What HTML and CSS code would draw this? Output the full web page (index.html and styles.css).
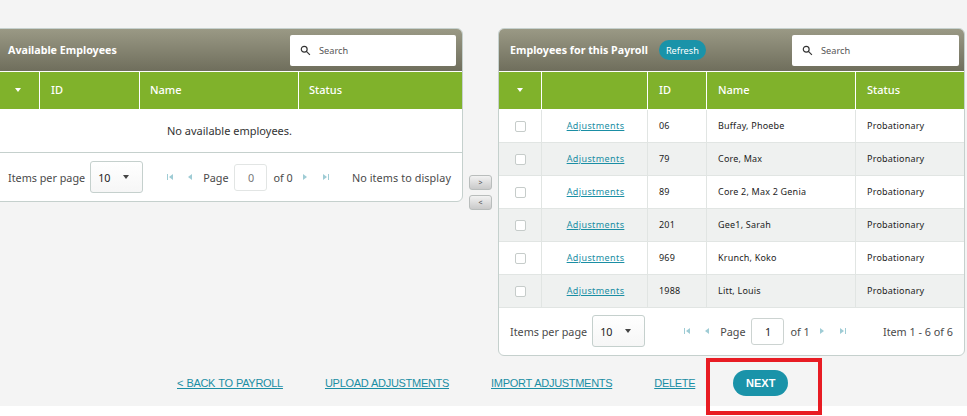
FILE: index.html
```html
<!DOCTYPE html>
<html lang="en">
<head>
<meta charset="utf-8">
<title>Payroll Employees</title>
<link rel="stylesheet" href="styles.css">
</head>
<body>
<div class="page">
  <div class="panels">
    <section class="panel panel-left">
      <header class="panel-head">
        <h2>Available Employees</h2>
        <label class="search"><svg class="search-icon" viewBox="0 0 12 12"><circle cx="4.6" cy="4.6" r="3.2"/><path d="M7 7l3.8 3.8"/></svg><span>Search</span></label>
      </header>
      <div class="grid-row grid-head cols-left">
        <div class="cell cell-sort"><i class="tri"></i></div>
        <div class="cell">ID</div>
        <div class="cell">Name</div>
        <div class="cell">Status</div>
      </div>
      <div class="empty">No available employees.</div>
      <footer class="pager">
        <span class="pager-label">Items per page</span>
        <div class="select"><span>10</span><i class="tri tri-dark"></i></div>
        <div class="pager-nav nav-left">
          <svg class="nav first" viewBox="0 0 6 6"><path d="M0 0h1v6H0zM6 0v6L2 3z"/></svg>
          <svg class="nav prev" viewBox="0 0 6 6"><path d="M5 0v6L1 3z"/></svg>
          <span>Page</span>
          <span class="page-box muted">0</span>
          <span>of 0</span>
          <svg class="nav next" viewBox="0 0 6 6"><path d="M1 0v6l4-3z"/></svg>
          <svg class="nav last" viewBox="0 0 6 6"><path d="M0 0v6l4-3zM5 0h1v6H5z"/></svg>
        </div>
        <span class="pager-info info-wide">No items to display</span>
      </footer>
    </section>

    <div class="movers">
      <button class="mover">&gt;</button>
      <button class="mover">&lt;</button>
    </div>

    <section class="panel panel-right">
      <header class="panel-head">
        <h2>Employees for this Payroll</h2>
        <button class="refresh">Refresh</button>
        <label class="search"><svg class="search-icon" viewBox="0 0 12 12"><circle cx="4.6" cy="4.6" r="3.2"/><path d="M7 7l3.8 3.8"/></svg><span>Search</span></label>
      </header>
      <div class="grid-row grid-head cols-right">
        <div class="cell cell-sort"><i class="tri"></i></div>
        <div class="cell"></div>
        <div class="cell">ID</div>
        <div class="cell">Name</div>
        <div class="cell">Status</div>
      </div>
      <div class="grid-row body-row cols-right">
        <div class="cell cell-check"><i class="check"></i></div><div class="cell cell-link"><a href="#">Adjustments</a></div><div class="cell">06</div><div class="cell">Buffay, Phoebe</div><div class="cell">Probationary</div>
      </div>
      <div class="grid-row body-row alt cols-right">
        <div class="cell cell-check"><i class="check"></i></div><div class="cell cell-link"><a href="#">Adjustments</a></div><div class="cell">79</div><div class="cell">Core, Max</div><div class="cell">Probationary</div>
      </div>
      <div class="grid-row body-row cols-right">
        <div class="cell cell-check"><i class="check"></i></div><div class="cell cell-link"><a href="#">Adjustments</a></div><div class="cell">89</div><div class="cell">Core 2, Max 2 Genia</div><div class="cell">Probationary</div>
      </div>
      <div class="grid-row body-row alt cols-right">
        <div class="cell cell-check"><i class="check"></i></div><div class="cell cell-link"><a href="#">Adjustments</a></div><div class="cell">201</div><div class="cell">Gee1, Sarah</div><div class="cell">Probationary</div>
      </div>
      <div class="grid-row body-row cols-right">
        <div class="cell cell-check"><i class="check"></i></div><div class="cell cell-link"><a href="#">Adjustments</a></div><div class="cell">969</div><div class="cell">Krunch, Koko</div><div class="cell">Probationary</div>
      </div>
      <div class="grid-row body-row alt cols-right">
        <div class="cell cell-check"><i class="check"></i></div><div class="cell cell-link"><a href="#">Adjustments</a></div><div class="cell">1988</div><div class="cell">Litt, Louis</div><div class="cell">Probationary</div>
      </div>
      <footer class="pager">
        <span class="pager-label">Items per page</span>
        <div class="select"><span>10</span><i class="tri tri-dark"></i></div>
        <div class="pager-nav nav-right">
          <svg class="nav first" viewBox="0 0 6 6"><path d="M0 0h1v6H0zM6 0v6L2 3z"/></svg>
          <svg class="nav prev" viewBox="0 0 6 6"><path d="M5 0v6L1 3z"/></svg>
          <span>Page</span>
          <span class="page-box">1</span>
          <span>of 1</span>
          <svg class="nav next" viewBox="0 0 6 6"><path d="M1 0v6l4-3z"/></svg>
          <svg class="nav last" viewBox="0 0 6 6"><path d="M0 0v6l4-3zM5 0h1v6H5z"/></svg>
        </div>
        <span class="pager-info">Item 1 - 6 of 6</span>
      </footer>
    </section>
  </div>

  <nav class="actions">
    <a href="#">&lt; BACK TO PAYROLL</a>
    <a href="#">UPLOAD ADJUSTMENTS</a>
    <a href="#">IMPORT ADJUSTMENTS</a>
    <a href="#">DELETE</a>
    <button class="next-btn">NEXT</button>
  </nav>
</div>
<div class="highlight"></div>
</body>
</html>
```
FILE: styles.css
```css
* { box-sizing: border-box; }
html, body { margin: 0; padding: 0; background: #fff; overflow: hidden; }
body {
  position: relative;
  width: 967px;
  height: 416px;
  font-family: "Noto Sans", "Open Sans", sans-serif;
  color: #2b2b2b;
}
.page {
  height: 406px;
  background: #f4f4f4;
  padding-top: 28px;
  overflow: hidden;
}
.panels { display: flex; align-items: flex-start; margin-left: -8px; }
.panel {
  background: #fff;
  border: 1px solid #c5d0cd;
  border-radius: 6px;
  overflow: hidden;
}
.panel-left { width: 471px; }
.panel-right { width: 467px; }
.panel-head {
  height: 42px;
  display: flex;
  align-items: center;
  padding: 0 6px 0 11px;
  background: linear-gradient(#9a9985, #6f6e5c);
}
.panel-left .panel-head { padding-left: 15px; }
.panel-right .panel-head { padding-right: 5px; }
.panel-head h2 {
  margin: 0;
  font-size: 10.7px;
  font-weight: 700;
  color: #fff;
  white-space: nowrap;
}
.search {
  margin-left: auto;
  width: 166px;
  height: 31px;
  background: #fff;
  border-radius: 2px;
  display: flex;
  align-items: center;
  gap: 8px;
  padding-left: 10px;
  font-size: 9.2px;
  color: #555;
}
.panel-right .search { width: 167px; }
.search-icon { width: 11px; height: 11px; fill: none; stroke: #333; stroke-width: 1.3; }
.refresh {
  margin-left: 11px;
  width: 47px;
  height: 20px;
  padding: 0;
  border: 0;
  border-radius: 10px;
  background: #1a93a9;
  color: #fff;
  font: 9.2px "Noto Sans", sans-serif;
}
.grid-row { display: grid; }
.cols-left { grid-template-columns: 47px 100px 159px 1fr; }
.cols-right { grid-template-columns: 43px 106px 59px 149px 1fr; }
.grid-head {
  height: 39px;
  background: #80b22b;
  border-top: 1px solid #fff;
  border-bottom: 1px solid #fff;
  color: #fff;
  font-size: 11px;
  font-weight: 500;
}
.cell {
  display: flex;
  align-items: center;
  padding-left: 11px;
  border-right: 1px solid #fff;
}
.grid-head .cell { padding-bottom: 2px; }
.cols-left .cell:nth-child(n+3) { padding-left: 10px; }
.cell:last-child { border-right: 0; }
.cell-sort { justify-content: center; padding-left: 0; }
.panel-left .cell-sort { padding-left: 4px; }
.tri {
  width: 0;
  height: 0;
  border-left: 3px solid transparent;
  border-right: 3px solid transparent;
  border-top: 4px solid #fff;
}
.tri-dark { border-top-color: #444; }
.body-row {
  height: 33px;
  font-size: 9px;
  color: #1d1d1d;
  border-bottom: 1px solid #e1e5e3;
  letter-spacing: 0.2px;
}
.body-row .cell { border-right: 1px solid #e1e5e3; padding-bottom: 2px; }
.body-row .cell:last-child { border-right: 0; }
.body-row.alt { background: #eff1f0; }
.body-row .cell-check { justify-content: center; padding-left: 0; padding-bottom: 0; }
.check {
  width: 11px;
  height: 11px;
  background: #fff;
  border: 1px solid #c6ccca;
  border-radius: 2px;
}
.cell-link { justify-content: center; padding-left: 2px; }
.cell-link a { color: #1a8ea4; letter-spacing: 0.4px; }
.empty {
  height: 43px;
  display: flex;
  align-items: center;
  justify-content: center;
  padding: 0 0 2px 4px;
  font-size: 11px;
  color: #333;
  border-bottom: 1px solid #c5d0cd;
}
.pager {
  height: 48px;
  display: flex;
  align-items: center;
  padding: 0 11px;
  font-size: 10.8px;
  color: #4a4a4a;
}
.panel-right .pager { height: 47px; padding-bottom: 1px; }
.panel-left .pager { padding-left: 15px; }
.select {
  margin-left: 5px;
  width: 53px;
  height: 32px;
  display: flex;
  align-items: center;
  justify-content: space-between;
  padding: 0 13px 0 7px;
  border: 1px solid #c5d0cd;
  border-radius: 3px;
  background: linear-gradient(#fff, #f6f6f6);
  color: #222;
}
.pager-nav { display: flex; align-items: center; }
.nav-left { margin-left: 24px; }
.nav-right { margin-left: 39px; }
.nav { width: 6px; height: 6px; fill: #9fccd5; }
.prev { margin-left: 14px; margin-right: 10px; }
.next { margin-left: 9px; margin-right: 15px; }
.page-box {
  width: 33px;
  height: 27px;
  margin: 0 6px;
  display: flex;
  align-items: center;
  justify-content: center;
  border: 1px solid #ccd3d1;
  border-radius: 3px;
  color: #222;
}
.page-box.muted { color: #777; border-color: #e2e5e4; }
.pager-info { margin-left: auto; }
.info-wide { letter-spacing: 0.1px; }
.movers {
  width: 35px;
  padding-top: 147px;
  display: flex;
  flex-direction: column;
  align-items: center;
  gap: 5px;
}
.mover {
  width: 23px;
  height: 15px;
  padding: 0;
  border: 1px solid #b9bdbc;
  border-radius: 3px;
  background: linear-gradient(#f2f2f2, #c9c9c9);
  color: #555;
  font: 7px "Noto Sans", sans-serif;
}
.actions {
  height: 26px;
  margin-top: 14px;
  padding-left: 177px;
  display: flex;
  align-items: center;
  gap: 42px;
  font-family: "Liberation Sans", Arial, sans-serif;
  font-size: 11px;
}
.actions a { color: #1a8ea4; letter-spacing: -0.3px; word-spacing: 0.5px; }
.next-btn {
  width: 55px;
  height: 26px;
  margin: 0 0 0 -4px;
  padding: 0;
  border: 0;
  border-radius: 13px;
  background: #1a93a9;
  color: #fff;
  font: 700 11px "Liberation Sans", Arial, sans-serif;
}
.highlight {
  position: absolute;
  left: 706px;
  top: 358px;
  width: 116px;
  height: 57px;
  border: 4px solid #e81c23;
}
```
